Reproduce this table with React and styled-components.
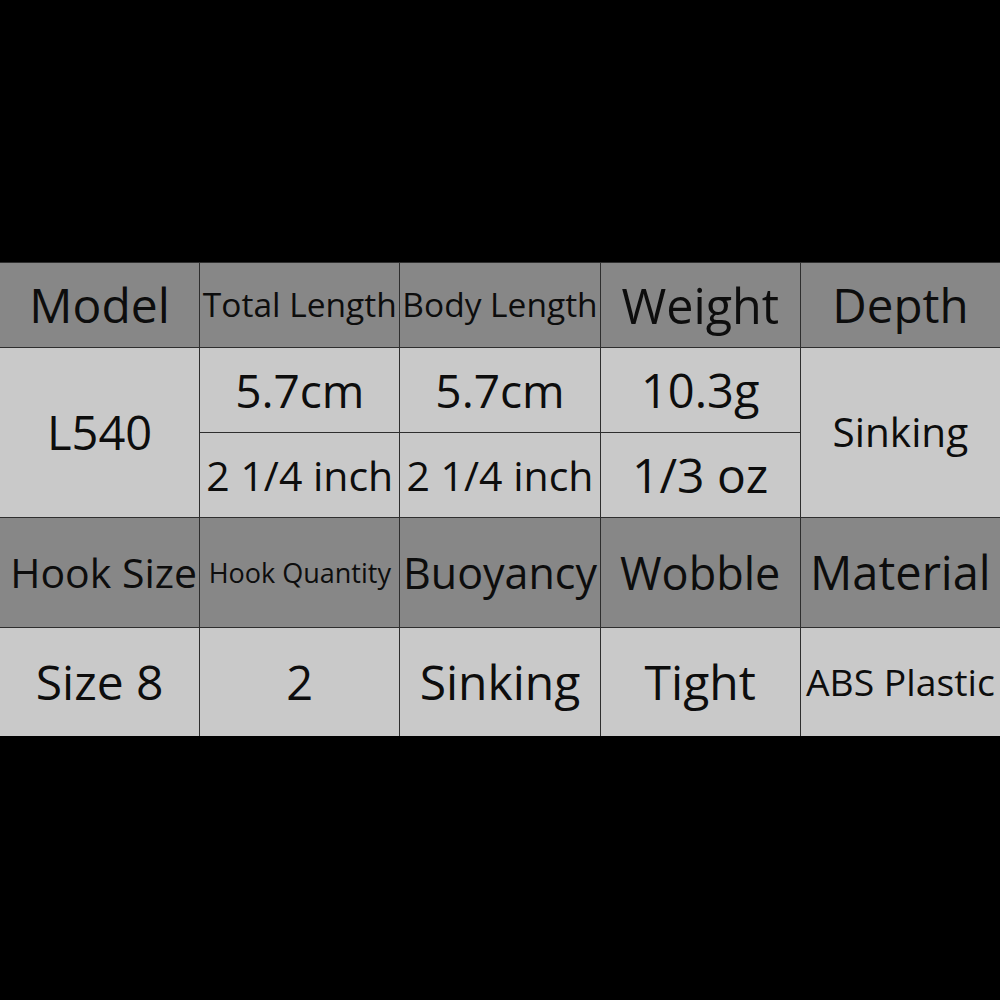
import React from "react";
import styled, { createGlobalStyle } from "styled-components";

const Global = createGlobalStyle`
  html, body { margin: 0; padding: 0; background: #000; }
  body { font-family: "Open Sans", "Noto Sans", sans-serif; }
`;

const Page = styled.div`
  width: 1000px;
  height: 1000px;
  background: #000;
  display: flex;
  flex-direction: column;
  padding-top: 262px;
  box-sizing: border-box;
`;

const Table = styled.div`
  display: grid;
  grid-template-columns: repeat(5, 1fr);
  grid-template-rows: 84px 84px 84px 109px 108px;
  gap: 1px;
  background: #2e2e2e;
  border-top: 1px solid #2e2e2e;
  width: 1000px;
`;

const Cell = styled.div`
  background: ${(p) => (p.$head ? "#878787" : "#c9c9c9")};
  display: flex;
  align-items: center;
  justify-content: center;
  white-space: nowrap;
  overflow: hidden;
  color: #0d0d0d;
  font-size: ${(p) => p.$size || 44}px;
  padding-left: ${(p) => p.$shift || 0}px;
  grid-row: ${(p) => (p.$span ? `span ${p.$span}` : "auto")};
  line-height: 1;
`;

export default function App() {
  return (
    <>
      <Global />
      <Page>
        <Table>
          <Cell $head $size={48}>Model</Cell>
          <Cell $head $size={33.5}>Total Length</Cell>
          <Cell $head $size={33.5}>Body Length</Cell>
          <Cell $head $size={48.5}>Weight</Cell>
          <Cell $head $size={47.5}>Depth</Cell>

          <Cell $span={2} $size={47}>L540</Cell>
          <Cell $size={46}>5.7cm</Cell>
          <Cell $size={46}>5.7cm</Cell>
          <Cell $size={47}>10.3g</Cell>
          <Cell $span={2} $size={40.5}>Sinking</Cell>

          <Cell $size={41}>2 1/4 inch</Cell>
          <Cell $size={41}>2 1/4 inch</Cell>
          <Cell $size={48}>1/3 oz</Cell>

          <Cell $head $size={41} $shift={8}>Hook Size</Cell>
          <Cell $head $size={27}>Hook Quantity</Cell>
          <Cell $head $size={43}>Buoyancy</Cell>
          <Cell $head $size={45}>Wobble</Cell>
          <Cell $head $size={47}>Material</Cell>

          <Cell $size={48}>Size 8</Cell>
          <Cell $size={47}>2</Cell>
          <Cell $size={48}>Sinking</Cell>
          <Cell $size={48}>Tight</Cell>
          <Cell $size={37.3}>ABS Plastic</Cell>
        </Table>
      </Page>
    </>
  );
}
